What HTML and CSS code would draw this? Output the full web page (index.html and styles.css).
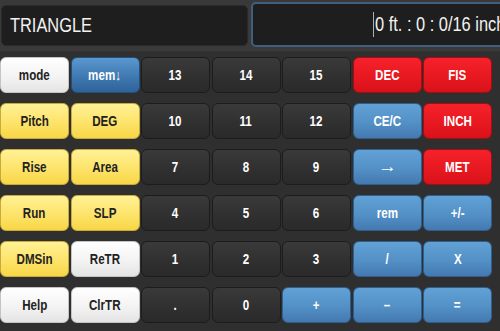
FILE: index.html
```html
<!DOCTYPE html>
<html>
<head>
<meta charset="utf-8">
<link rel="stylesheet" href="styles.css">
</head>
<body>
<div class="app">
  <div class="header">
    <div class="disp left"><span class="sx big">TRIANGLE</span></div>
    <div class="disp right"><span class="cursor"></span><span class="sx big">0 ft. : 0 : 0/16 inch</span></div>
  </div>
  <div class="pad">
    <div class="k w"><span class="sx">mode</span></div>
    <div class="k bd"><span class="sx">mem↓</span></div>
    <div class="k d"><span class="sx">13</span></div>
    <div class="k d"><span class="sx">14</span></div>
    <div class="k d"><span class="sx">15</span></div>
    <div class="k r"><span class="sx">DEC</span></div>
    <div class="k r"><span class="sx">FIS</span></div>

    <div class="k y"><span class="sx">Pitch</span></div>
    <div class="k y"><span class="sx">DEG</span></div>
    <div class="k d"><span class="sx">10</span></div>
    <div class="k d"><span class="sx">11</span></div>
    <div class="k d"><span class="sx">12</span></div>
    <div class="k b"><span class="sx">CE/C</span></div>
    <div class="k r"><span class="sx">INCH</span></div>

    <div class="k y"><span class="sx">Rise</span></div>
    <div class="k y"><span class="sx">Area</span></div>
    <div class="k d"><span class="sx">7</span></div>
    <div class="k d"><span class="sx">8</span></div>
    <div class="k d"><span class="sx">9</span></div>
    <div class="k b"><span class="sx arrow">→</span></div>
    <div class="k r"><span class="sx">MET</span></div>

    <div class="k y"><span class="sx">Run</span></div>
    <div class="k y"><span class="sx">SLP</span></div>
    <div class="k d"><span class="sx">4</span></div>
    <div class="k d"><span class="sx">5</span></div>
    <div class="k d"><span class="sx">6</span></div>
    <div class="k b"><span class="sx">rem</span></div>
    <div class="k b"><span class="sx">+/-</span></div>

    <div class="k y"><span class="sx">DMSin</span></div>
    <div class="k w"><span class="sx">ReTR</span></div>
    <div class="k d"><span class="sx">1</span></div>
    <div class="k d"><span class="sx">2</span></div>
    <div class="k d"><span class="sx">3</span></div>
    <div class="k b"><span class="sx">/</span></div>
    <div class="k b"><span class="sx">X</span></div>

    <div class="k w"><span class="sx">Help</span></div>
    <div class="k w"><span class="sx">ClrTR</span></div>
    <div class="k d"><span class="sx">.</span></div>
    <div class="k d"><span class="sx">0</span></div>
    <div class="k b"><span class="sx">+</span></div>
    <div class="k b"><span class="sx">–</span></div>
    <div class="k b"><span class="sx">=</span></div>
  </div>
</div>
</body>
</html>
```
FILE: styles.css
```css
html, body {
  margin: 0;
  padding: 0;
  background: #2f2f2f;
  overflow: hidden;
}
.app {
  width: 500px;
  height: 331px;
  overflow: hidden;
  font-family: "Liberation Sans", Arial, sans-serif;
}
.header {
  height: 52px;
  background: #393939;
  display: flex;
  align-items: flex-start;
  gap: 3px;
  padding-left: 1px;
  border-bottom: 1px solid #333;
  box-sizing: border-box;
}
.disp {
  flex: none;
  background: #1e1e1e;
  border-radius: 5px;
  display: flex;
  align-items: center;
  color: #f2f2f2;
  box-sizing: border-box;
  overflow: hidden;
  white-space: nowrap;
}
.left {
  width: 247px;
  height: 41px;
  margin-top: 5px;
  padding-left: 8px;
  border: 1px solid #2a2a2a;
}
.right {
  width: 270px;
  height: 45px;
  margin-top: 2px;
  border: 2px solid #3f5f80;
  padding-left: 120px;
}
.cursor {
  display: inline-block;
  flex: none;
  width: 1px;
  height: 25px;
  background: #b0b0b0;
  margin-right: 1px;
}
.sx {
  display: inline-block;
  transform: scaleX(0.8);
}
.left .sx, .right .sx {
  transform-origin: left center;
  transform: scaleX(0.82);
}
.big {
  font-size: 20px;
}
.arrow {
  font-size: 17px;
  transform: scaleX(1.1);
}
.pad {
  margin-top: 5px;
  width: 492px;
  display: grid;
  grid-template-columns: repeat(7, 1fr);
  grid-auto-rows: 36px;
  column-gap: 1.5px;
  row-gap: 10px;
}
.k {
  border-radius: 6px;
  display: flex;
  align-items: center;
  justify-content: center;
  font-weight: bold;
  font-size: 14.5px;
  box-sizing: border-box;
  border: 1px solid transparent;
}
.w {
  background: linear-gradient(#ffffff, #f3f3f3 55%, #e4e4e4);
  border-color: #c4c4c4;
  color: #222;
}
.y {
  background: linear-gradient(#fff194, #fde36a 55%, #f7d646);
  border-color: #c8ab3a;
  color: #222;
}
.d {
  background: linear-gradient(#3a3a3a, #303030 55%, #2a2a2a);
  border-color: #1c1c1c;
  color: #fff;
}
.b {
  background: linear-gradient(#62a1d6, #5290c6 55%, #4479b0);
  border-color: #2f5f8e;
  color: #fff;
}
.bd {
  background: linear-gradient(#5a98cf, #3f79b2 55%, #2f639a);
  border-color: #234f7c;
  color: #fff;
}
.r {
  background: linear-gradient(#f5222b, #e81820 55%, #d8121a);
  border-color: #a30d12;
  color: #fff;
}
```
